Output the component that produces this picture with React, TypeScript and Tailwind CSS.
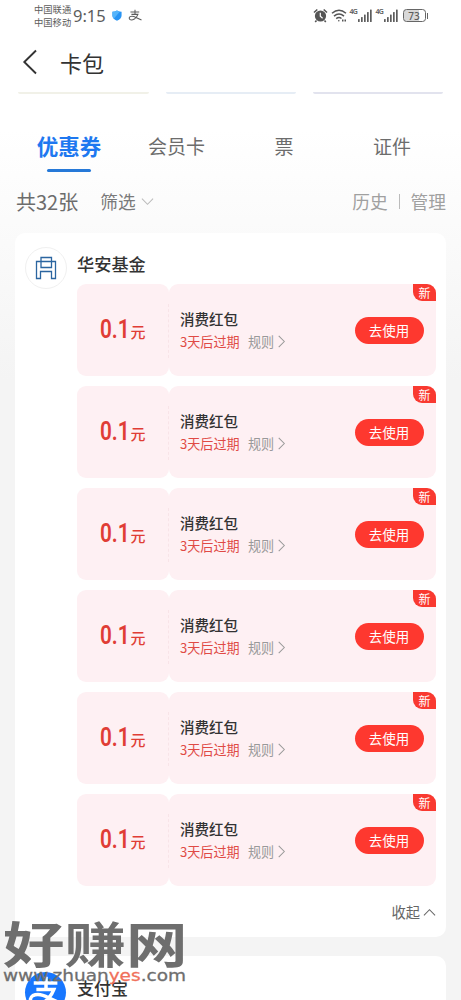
import React from "react";

const coupons = Array.from({ length: 6 }, (_, i) => i);

function Chevron({ d, className, w = 1.1 }: { d: string; className: string; w?: number }) {
  return (
    <svg viewBox="0 0 14 14" className={className} fill="none" stroke="currentColor" strokeWidth={w}>
      <path d={d} />
    </svg>
  );
}

function AlipayGlyph({ className, w }: { className: string; w: number }) {
  return (
    <svg viewBox="0 0 40 40" className={className} fill="none" stroke="currentColor" strokeWidth={w}>
      <path d="M6 9H33M20 2V16M9 16.500H29Q26 25 18 31Q9 36 4 32Q0 27 5 23.500Q12 20 23 26L40 34" />
    </svg>
  );
}

function Signal() {
  return (
    <div className="flex h-[15px] w-[23px] shrink-0 items-start">
      <span className="w-[8px] font-['Noto_Sans'] text-[7px] leading-[7px] font-semibold tracking-[-0.8px]">4G</span>
      <svg viewBox="0 0 15 15" className="h-[15px] w-[15px]" fill="currentColor">
        <rect x="0" y="11" width="1.7" height="3" rx=".5" />
        <rect x="3" y="9" width="1.7" height="5" rx=".5" />
        <rect x="6" y="6.5" width="1.7" height="7.5" rx=".5" />
        <rect x="9" y="4" width="1.7" height="10" rx=".5" />
        <rect x="12" y="1.5" width="1.7" height="12.5" rx=".5" />
      </svg>
    </div>
  );
}

function StatusBar() {
  return (
    <div className="flex h-[31px] items-center pl-[34px] text-[#5c5c5c]">
      <div className="w-[39px] shrink-0 text-[9.3px] leading-[13px] whitespace-nowrap">
        <div>中国联通</div>
        <div>中国移动</div>
      </div>
      <span className="w-[38px] shrink-0 font-['Noto_Sans'] text-[16.5px] leading-[20px] whitespace-nowrap">9:15</span>
      <svg viewBox="0 0 12 12" className="h-[11px] w-[12px] shrink-0">
        <path d="M6 .5Q8.500 2 11 2V6Q11 9.500 6 11.700Q1 9.500 1 6V2Q3.500 2 6 .5Z" fill="#2894f4" />
        <path d="M6 .5Q3.500 2 1 2V6Q1 8 2.500 9.500L9 1.800Q7.500 1.400 6 .5Z" fill="#55b4fa" />
      </svg>
      <AlipayGlyph w={3.2} className="ml-[5px] h-[13px] w-[14px] shrink-0" />
      <div className="ml-auto flex h-[15px] items-center pr-[33px]">
        <svg viewBox="0 0 15 15" className="h-[15px] w-[15px]" fill="none">
          <circle cx="7.500" cy="8" r="5.600" fill="#555" />
          <path d="M1 4.500L4.300 1.500M14 4.500L10.700 1.500M3.500 12.500L2.200 14M11.500 12.500L12.800 14" stroke="#555" strokeWidth="1.600" />
          <path d="M7.300 4.800V8.300L9.600 10.300" stroke="#fff" strokeWidth="1.200" />
        </svg>
        <svg viewBox="0 0 17 15" className="ml-[3px] h-[15px] w-[17px]" fill="none" stroke="#555" strokeWidth="1.500">
          <path d="M1 5.200Q8 -.8 15 5.200M3 8.100Q8 3.800 13 8.100M5.200 10.700Q8 8.500 10.500 10.500" />
          <circle cx="7.800" cy="12.700" r=".8" fill="#555" stroke="none" />
          <path d="M11 12.500H12.500M13.500 12.500H15" strokeWidth="2" />
        </svg>
        <div className="ml-[2px]"><Signal /></div>
        <div className="ml-[3px]"><Signal /></div>
        <div className="ml-[4px] flex h-[13px] w-[23px] items-center justify-center rounded-[3.5px] border-[1.5px] border-[#666] bg-[linear-gradient(90deg,#d8d8d8_72%,#fff_72%)] font-['Noto_Sans'] text-[10px] leading-[10px] font-medium">
          73
        </div>
        <div className="ml-[1px] h-[6px] w-[1.500px] bg-[#666]" />
      </div>
    </div>
  );
}

function Coupon() {
  return (
    <div className="relative flex h-[92px]">
      <div className="flex w-[92px] items-center justify-center rounded-[9px] bg-[#fef0f3] text-[#e03d35]">
        <span className="inline-block w-[30px] shrink-0 origin-left scale-x-[.83] font-['Roboto'] text-[25px] leading-[30px] font-semibold whitespace-nowrap">0.1</span>
        <span className="pt-[4px] text-[15px] leading-[20px] font-medium">元</span>
      </div>
      <div className="flex flex-1 items-center rounded-[9px] bg-[#fef0f3] pr-[12.5px] pl-[11px]">
        <div className="pt-px">
          <div className="text-[14.5px] leading-[22px] font-medium text-[#333]">消费红包</div>
          <div className="flex items-center text-[13.1px] leading-[23px]">
            <span className="w-[68px] text-[#e04a45]">3天后过期</span>
            <span className="text-[#999]">规则</span>
            <Chevron d="M4 1L10 7L4 13" className="ml-px h-[13px] w-[13px] text-[#999]" />
          </div>
        </div>
        <button className="ml-auto h-[27px] w-[69px] rounded-full bg-[#fe382f] text-[13.500px] leading-[27px] text-white">去使用</button>
      </div>
      <div className="absolute top-[20px] left-[91px] h-[54px] border-l border-dashed border-[#f8e4e8]" />
      <div className="absolute top-0 right-0 h-[17px] w-[23px] rounded-tr-[9px] rounded-bl-[9px] bg-[#f93930] text-center text-[12px] leading-[17px] text-white">新</div>
    </div>
  );
}

export default function App() {
  return (
    <div className="relative h-[1000px] w-[461px] overflow-hidden bg-[linear-gradient(180deg,#fff_0px,#fff_130px,#f4f4f4_380px,#f4f4f4_100%)] font-['Noto_Sans_CJK_SC',sans-serif]">
      <StatusBar />
      <header className="flex h-[61px] items-center pl-[20px] text-[#333]">
        <svg viewBox="0 0 20 26" className="h-[26px] w-[20px]" fill="none" stroke="currentColor" strokeWidth="1.900">
          <path d="M16 1.500L4.300 13L16 24.500" />
        </svg>
        <h1 className="ml-[20px] text-[22px] leading-[32px]">卡包</h1>
      </header>
      <div className="flex h-[2px] gap-[17px] pl-[18px]">
        <div className="w-[131px] rounded-b bg-[#f1f1e8]" />
        <div className="w-[130px] rounded-b bg-[#e6edf5]" />
        <div className="w-[130px] rounded-b bg-[#e2e3ee]" />
      </div>
      <nav className="flex h-[88px] pt-[35px] text-[19px] leading-[34px] text-[#6c6c6c]">
        <div className="flex w-[138px] flex-col items-center text-[21.500px] font-bold text-[#1e78f0]">
          <span>优惠券</span>
          <span className="mt-[6px] h-[3px] w-[44px] rounded-full bg-[#2679d8]" />
        </div>
        <div className="w-[77px] text-center">会员卡</div>
        <div className="w-[138px] text-center">票</div>
        <div className="w-[78px] text-center">证件</div>
      </nav>
      <div className="flex h-[51px] items-center pr-[15px] pb-[12px] pl-[16px] text-[17.700px] text-[#7a7a7a]">
        <span className="text-[20px] text-[#6c6c6c]">共32张</span>
        <span className="ml-[22px]">筛选</span>
        <Chevron d="M1 4L7 10L13 4" className="ml-[5px] h-[13px] w-[13px] text-[#bbb]" />
        <span className="ml-auto text-[#a0a0a0]">历史</span>
        <span className="mr-[11px] ml-[11px] h-[15px] w-px bg-[#bbb]" />
        <span className="text-[#a0a0a0]">管理</span>
      </div>
      <section className="mx-[15px] flex h-[704px] rounded-[10px] bg-white pr-[10px] pl-[10px]">
        <div className="mt-[14px] flex h-[42px] w-[42px] shrink-0 items-center justify-center rounded-full border border-[#f0f0f0]">
          <svg viewBox="0 0 22 24" className="h-[24px] w-[22px]" fill="none" stroke="#2b65a0" strokeWidth="1.300">
            <path d="M6 1.500H16.500V11.500H6ZM6 5.500H1.500V22.500H5.500V15.500H16.500V22.500H20.500V5.500H6" />
          </svg>
        </div>
        <div className="ml-[10px] flex-1">
          <h2 className="h-[51px] pt-[18px] text-[17.2px] leading-[26px] font-medium text-[#333]">华安基金</h2>
          <div className="flex flex-col gap-[10px]">
            {coupons.map((i) => <Coupon key={i} />)}
          </div>
          <div className="mt-[15px] flex items-center justify-end text-[14.300px] leading-[22px] text-[#666]">
            收起
            <Chevron d="M1 10L7 4L13 10" className="ml-[3px] h-[13px] w-[13px]" />
          </div>
        </div>
      </section>
      <section className="mx-[15px] mt-[19px] flex h-[90px] rounded-[10px] bg-white pl-[10px]">
        <div className="mt-[16px] flex h-[41px] w-[41px] items-center justify-center rounded-full bg-[#1877ff] text-white">
          <AlipayGlyph w={4} className="h-[35px] w-[36px]" />
        </div>
        <h2 className="mt-[19px] ml-[11px] text-[17px] leading-[26px] font-medium text-[#333]">支付宝</h2>
      </section>
      <div className="absolute top-[918px] left-[3px] w-[186px] text-[#6e6e6e]">
        <div className="h-[52px] origin-top-left scale-y-[.8] text-[61.500px] leading-[60px] font-bold whitespace-nowrap">好赚网</div>
        <div className="h-[12px] w-[150px] origin-left scale-x-[1.155] font-['DejaVu_Sans'] text-[16px] leading-[12px] whitespace-nowrap [-webkit-text-stroke:0.3px]">
          www.zhuan<span className="text-[#f0705a]">yes</span>.com
        </div>
      </div>
    </div>
  );
}
